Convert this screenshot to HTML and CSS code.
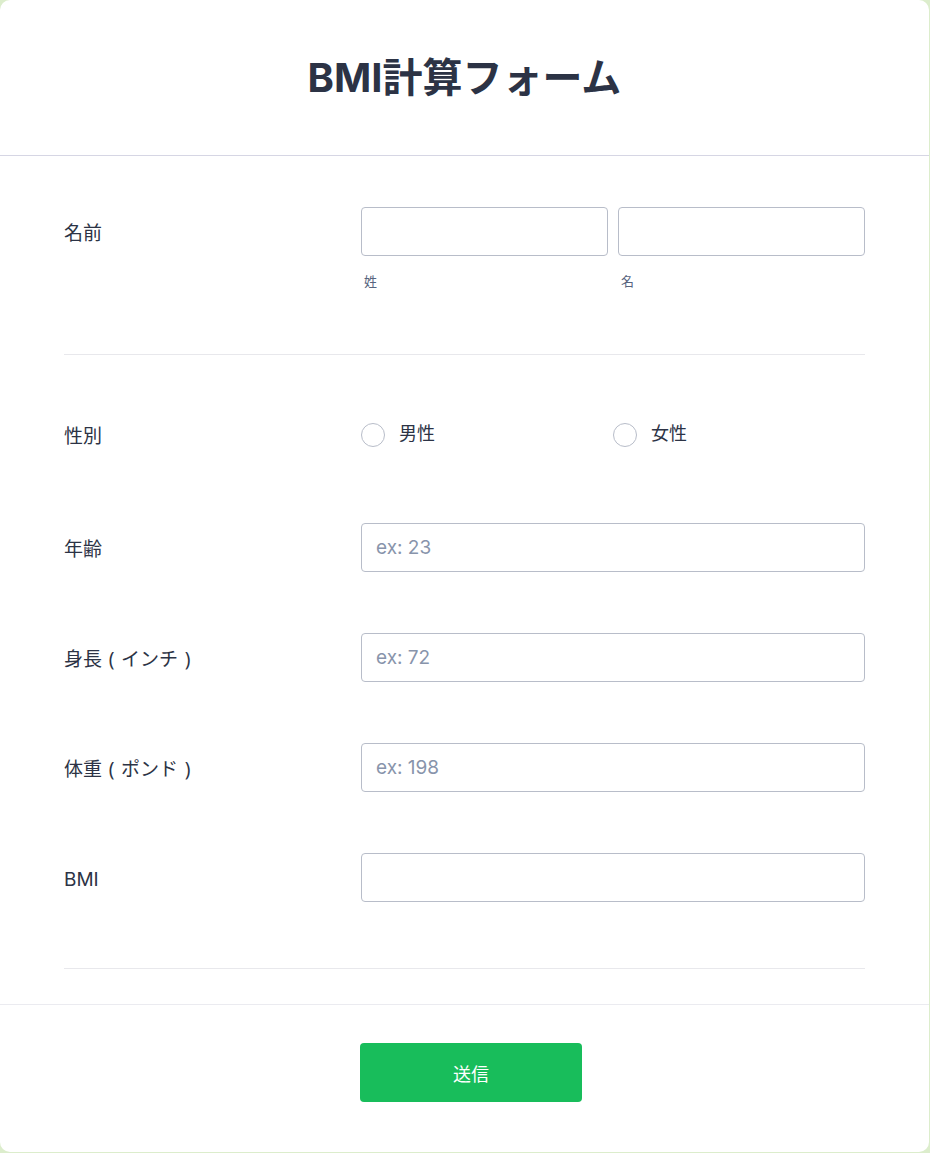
FILE: index.html
```html
<!DOCTYPE html>
<html lang="ja">

<head>
  <meta charset="utf-8">
  <title>BMI計算フォーム</title>
  <link rel="stylesheet" href="styles.css">
</head>

<body>
  <form class="form-card">
    <div class="form-header">
      <h1>BMI計算フォーム</h1>
    </div>

    <div class="form-body">
      <!-- Name -->
      <div class="form-line">
        <label class="form-label">名前</label>
        <div class="field-pair">
          <div class="sub-field">
            <input type="text" id="firstName">
            <span class="sub-label">姓</span>
          </div>
          <div class="sub-field">
            <input type="text" id="lastName">
            <span class="sub-label">名</span>
          </div>
        </div>
      </div>

      <hr class="divider divider-name">

      <!-- Gender -->
      <div class="form-line line-gender">
        <label class="form-label">性別</label>
        <div class="radio-group">
          <label class="radio-item"><input type="radio" name="gender"><span>男性</span></label>
          <label class="radio-item"><input type="radio" name="gender"><span>女性</span></label>
        </div>
      </div>

      <div class="form-line line-input">
        <label class="form-label" for="age">年齢</label>
        <input type="text" id="age" placeholder="ex: 23">
      </div>

      <div class="form-line line-input">
        <label class="form-label" for="height">身長<span class="paren">(</span>インチ<span class="paren">)</span></label>
        <input type="text" id="height" placeholder="ex: 72">
      </div>

      <div class="form-line line-input">
        <label class="form-label" for="weight">体重<span class="paren">(</span>ポンド<span class="paren">)</span></label>
        <input type="text" id="weight" placeholder="ex: 198">
      </div>

      <div class="form-line line-input">
        <label class="form-label" for="bmi">BMI</label>
        <input type="text" id="bmi">
      </div>

      <hr class="divider divider-end">
    </div>

    <div class="form-footer">
      <button type="submit" class="submit-btn">送信</button>
    </div>
  </form>
</body>

</html>
```

FILE: styles.css
```css
/* Global styles */
body {
  margin: 0;
  background-color: #dcedcc;
  font-family: 'Inter', 'Noto Sans CJK JP', sans-serif;
  color: #2c3345;
}

/* Card */
.form-card {
  width: 929px;
  height: 1152px;
  background-color: #ffffff;
  border-radius: 10px;
  overflow: hidden;
}

/* Header */
.form-header {
  height: 155px;
  display: flex;
  align-items: center;
  justify-content: center;
  border-bottom: 1px solid #d6d6e4;
}

.form-header h1 {
  margin: 0;
  padding-bottom: 6px;
  font-size: 40px;
  font-weight: 700;
  color: #2c3345;
}

/* Body */
.form-body {
  padding: 51px 64px 0;
}

.form-line {
  display: grid;
  grid-template-columns: 297px 504px;
}

.form-label {
  height: 49px;
  box-sizing: border-box;
  padding-top: 4px;
  font-size: 19px;
  line-height: 45px;
  color: #2c3345;
}

/* full-width parentheses, glyph centered in the cell */
.paren {
  display: inline-block;
  width: 1em;
  text-align: center;
  font-family: 'Noto Sans', sans-serif;
}

input[type="text"] {
  box-sizing: border-box;
  width: 100%;
  height: 49px;
  margin: 0;
  padding: 0 14px;
  border: 1px solid #b8bdc9;
  border-radius: 4px;
  font-family: 'Inter', 'Noto Sans CJK JP', sans-serif;
  font-size: 19px;
  color: #2c3345;
  background-color: #ffffff;
}

input[type="text"]::placeholder {
  color: #8894ab;
}

.field-pair {
  display: grid;
  grid-template-columns: 1fr 1fr;
  gap: 10px;
}

.sub-field {
  display: flex;
  flex-direction: column;
}

.sub-label {
  margin-top: 15px;
  padding-left: 3px;
  font-size: 13px;
  line-height: 20px;
  color: #57647e;
}

/* Dividers */
.divider {
  margin: 0;
  border: none;
  border-top: 1px solid #e8e8ec;
}

.divider-name {
  margin-top: 63px;
}

.divider-end {
  margin-top: 66px;
}

/* Gender */
.line-gender {
  margin-top: 55px;
  margin-bottom: 64px;
}

.radio-group {
  display: grid;
  grid-template-columns: 252px 252px;
  align-items: center;
}

.radio-item {
  display: flex;
  align-items: center;
  gap: 14px;
  font-size: 18px;
  line-height: 24px;
  color: #2c3345;
}

.radio-item span {
  margin-top: -2px;
}

.radio-item input {
  appearance: none;
  box-sizing: border-box;
  width: 24px;
  height: 24px;
  margin: 0;
  border: 1.5px solid #b8bdc9;
  border-radius: 50%;
  background-color: #ffffff;
}

.line-input + .line-input {
  margin-top: 61px;
}

/* Footer */
.form-footer {
  margin-top: 35px;
  border-top: 1px solid #ebebf0;
  padding-top: 38px;
  display: flex;
  justify-content: center;
}

.submit-btn {
  width: 222px;
  height: 59px;
  margin-left: 13px;
  border: none;
  border-radius: 4px;
  background-color: #18bd5b;
  color: #ffffff;
  font-family: 'Inter', 'Noto Sans CJK JP', sans-serif;
  font-size: 18px;
  cursor: pointer;
}
```
